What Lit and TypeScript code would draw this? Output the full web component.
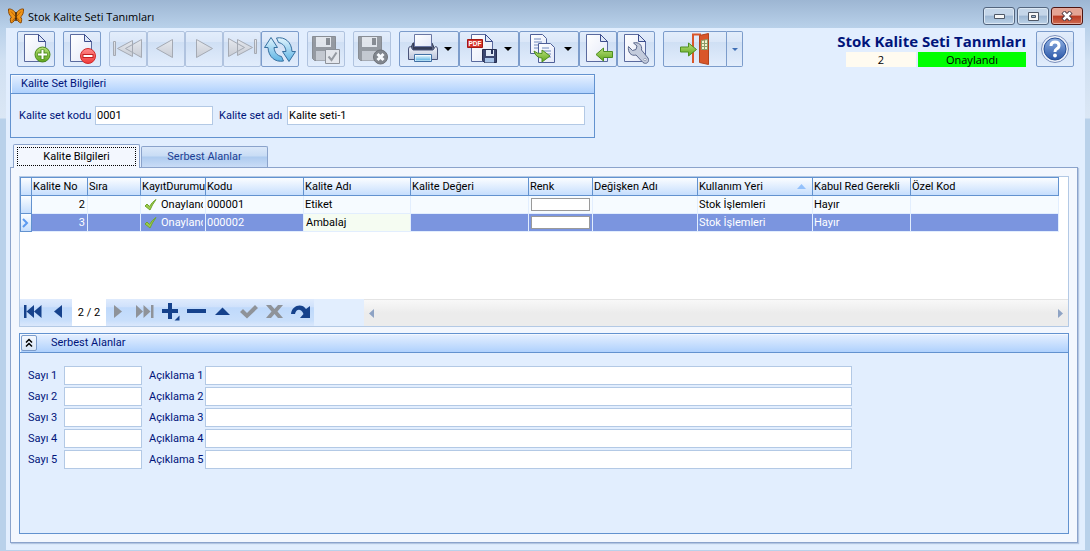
import { LitElement, html, svg, css } from "lit";
import { customElement } from "lit/decorators.js";

const page = svg`<path d="M4.500 1.500H18.500l7 7V28.500H4.500z" fill="url(#pg)" stroke="#5a6a9e"/><path d="M18.500 1.500v7h7z" fill="#dfe8f7" stroke="#3c4d8c"/>`;
const defs = svg`<defs>
  <linearGradient id="pg" x1="0" y1="0" x2="1" y2="1"><stop offset="0" stop-color="#fff"/><stop offset="1" stop-color="#e3e8f8"/></linearGradient>
  <linearGradient id="gn" x1="0" y1="0" x2="0" y2="1"><stop offset="0" stop-color="#b8e07a"/><stop offset="1" stop-color="#5ea51c"/></linearGradient>
  <linearGradient id="rd" x1="0" y1="0" x2="0" y2="1"><stop offset="0" stop-color="#ff8a8a"/><stop offset="1" stop-color="#f03a3a"/></linearGradient>
  <linearGradient id="gy" x1="0" y1="0" x2="0" y2="1"><stop offset="0" stop-color="#ececee"/><stop offset="1" stop-color="#c4c6cc"/></linearGradient>
  <linearGradient id="bl" x1="0" y1="0" x2="0" y2="1"><stop offset="0" stop-color="#e2f4fd"/><stop offset="1" stop-color="#5db4e4"/></linearGradient>
  <linearGradient id="hp" x1="0" y1="0" x2="0" y2="1"><stop offset="0" stop-color="#8fb0e2"/><stop offset="1" stop-color="#2a56a8"/></linearGradient>
  <linearGradient id="mt" x1="0" y1="0" x2="0" y2="1"><stop offset="0" stop-color="#f4f6fb"/><stop offset="1" stop-color="#b9c2d8"/></linearGradient>
</defs>`;
const floppy = svg`<path d="M2.500 3.500H25.500V27.500H4.500L2.500 25.500z" fill="#85888d" stroke="#74777c"/><path d="M6 4h15v10H6z" fill="#e4e6ea"/><path d="M16 5h4v7h-4z" fill="#74777c"/><path d="M6 18h15v9.500H6z" fill="#bfc2c8"/>`;

const glyphs: Record<string, unknown> = {
  add: svg`${page}<circle cx="22.500" cy="21.500" r="7.500" fill="url(#gn)" stroke="#4b8a1c"/><path d="M22.500 16.500v10M17.500 21.500h10" stroke="#4b8a1c" stroke-width="4"/><path d="M22.500 17v9M18 21.500h9" stroke="#fff" stroke-width="2"/>`,
  remove: svg`${page}<circle cx="22" cy="23" r="7.500" fill="url(#rd)" stroke="#d02a2a"/><path d="M16.500 23h11" stroke="#c22020" stroke-width="4"/><path d="M17.500 23h9" stroke="#fff" stroke-width="2"/>`,
  first: svg`<g fill="url(#gy)" stroke="#999ca3"><path d="M1.500 8.500h2v14h-2zM20.500 7.500v16L5.500 15.500zM29.500 6.500v18L13.500 15.500z"/></g>`,
  prev: svg`<path d="M22.500 6.500v18L6.500 15.500z" fill="url(#gy)" stroke="#999ca3"/>`,
  next: svg`<path d="M8.500 6.500v18l16-9z" fill="url(#gy)" stroke="#999ca3"/>`,
  last: svg`<g fill="url(#gy)" stroke="#999ca3"><path d="M28.500 6.500h2v14h-2zM11.500 6.500v16l15-8zM2.500 5.500v18l16-9z"/></g>`,
  refresh: svg`<g fill="url(#bl)" stroke="#376f9f" stroke-linejoin="round"><path d="M7 4.500L13.500 14.500H10C10.500 19.500 13 22.500 17.500 23.500L19.500 28C11 29.500 4.500 24 4 14.500H.500z"/><path d="M25 28.500L18.500 18.500H22C21.500 13.500 19 10.500 14.500 9.500L12.500 5C21 3.500 27.500 9 28 18.500H31.500z"/></g>`,
  save: svg`${floppy}<path d="M15.500 16.500h14v14h-14z" fill="#e6e7ea" stroke="#7a7d83"/><path d="M18.500 23.500l3 3.500 5-7.500" fill="none" stroke="#85888d" stroke-width="2"/>`,
  cancel: svg`${floppy}<circle cx="24.500" cy="24" r="7" fill="#6c6f74" stroke="#54565a"/><path d="M21.500 21l6 6M27.500 21l-6 6" stroke="#fff" stroke-width="3"/>`,
  print: svg`<path d="M6 10h19l4 9H2z" fill="#59637e" stroke="#323a54"/><path d="M6 10h19v7H6z" fill="#343c57"/><path d="M7.500 1.500h17v12h-17z" fill="url(#pg)" stroke="#6a77a3"/><path d="M1.500 16q0-2.500 2-2.500l2.500 3.500h20l2.500-3.500q2 0 2 2.500v10.500h-29z" fill="url(#mt)" stroke="#4b557a"/><path d="M7.500 21.500h17v7h-17z" fill="#fff" stroke="#4170a5"/><path d="M8.500 22.500h15v5h-15z" fill="url(#bl)"/>`,
  pdf: svg`${page}<path d="M.500 6.500h15v8h-15z" fill="#d4322c" stroke="#a31812"/><text x="1.500" y="13" font-size="6.500" font-weight="700" font-family="Liberation Sans, sans-serif" fill="#fff">PDF</text><path d="M15.500 16.500h14v13h-12l-2-2z" fill="#3b4770" stroke="#252e50"/><path d="M19 17h8v6h-8z" fill="#dfe9f7"/><path d="M24 17h2v4h-2z" fill="#27325a"/><path d="M18 25h9v4.500h-9z" fill="#a8c4e8"/>`,
  copy: svg`<path d="M3.500 1.500h12l4 4v15h-16z" fill="url(#pg)" stroke="#4f6098"/><path d="M7 6h7M7 9h8M7 12h8M7 15h8" stroke="#7189bd"/><path d="M11.500 10.500h12l4 4v15h-16z" fill="url(#pg)" stroke="#4f6098"/><path d="M15 15h7M15 18h9M15 21h9M15 24h9" stroke="#7189bd"/><path d="M7 18q3 3 8 2.500v-3.500l8 6-8 6v-4Q9 25 7 18z" fill="url(#gn)" stroke="#4e8f20"/>`,
  export: svg`${page}<path d="M14 21.500l7.500-6.500v3.500h9v6h-9v3.500z" fill="url(#gn)" stroke="#4e8f20"/>`,
  setup: svg`${page}<path d="M9.500 11.500l4 4 3.500-1 1-3.500-3.500-3c5-1.500 9 2 8 7l6.500 8c2 3.500-1.500 7-5 4.500L17 20c-5 1.500-8.500-3-7.500-8.500z" transform="translate(-1 2)" fill="#c3cbdc" stroke="#5b688c"/><circle cx="25" cy="26.500" r="1.200" fill="#fff" stroke="#5b688c" stroke-width=".5"/>`,
  exit: svg`<path d="M14 30V1.500h8" fill="none" stroke="#d9562a" stroke-width="2"/><path d="M20.500 2.500l9-2v31l-9-2z" fill="#d9562a" stroke="#b3431c"/><path d="M22.500 7.500l6-1v10h-6z" fill="#f3f2cf" stroke="#8a9a68"/><path d="M25.500 7v9.500M22.500 10.500h6M22.500 13.500h6" stroke="#8a9a68"/><path d="M1.500 14h8v-4l8 6.500-8 6.500v-4h-8z" fill="url(#gn)" stroke="#4e8f20"/>`,
  help: svg`<circle cx="16" cy="16" r="13.500" fill="#eef2fa" stroke="#7a8fbd"/><circle cx="16" cy="16" r="11" fill="url(#hp)" stroke="#274f96"/><path d="M12 13q0-4 4-4t4 3.500q0 2.500-2.500 3.500-1.500.800-1.500 3" fill="none" stroke="#fff" stroke-width="3"/><circle cx="16" cy="22.500" r="1.900" fill="#fff"/>`,
};

const icon = (name: string) => html`<svg class="icon" viewBox="0 0 32 32" aria-hidden="true">${defs}${glyphs[name]}</svg>`;

const navGlyphs: [string, string, boolean][] = [
  ["İlk", "M1 3h2.500v13H1zM11 3v13L3.500 9.500zM18.500 3v13L11 9.500z", true],
  ["Önceki", "M13 3v13L5 9.500z", true],
];
const navGlyphs2: [string, string, boolean][] = [
  ["Sonraki", "M5 3v13l8-6.500z", false],
  ["Son", "M1 3v13l7-6.500zM8.500 3v13l7-6.500zM16 3h2.500v13H16z", false],
  ["Ekle", "M7 1h4v6h6v4h-6v6H7v-6H1V7h6zM18.500 13.500v5h-5z", true],
  ["Sil", "M0 7h19v4H0z", true],
  ["Düzenle", "M2 13h15L9.500 5.500z", true],
  ["Kaydet", "M1 10l3-3 4 4 8-8 3 3L8 16.500z", false],
  ["İptal", "M1 3h5l3.500 4L13 3h5l-5.500 6.500L18 16h-5l-3.500-4L6 16H1l5.500-6.500z", false],
  ["Yenile", "M0 12C1 3 11 1 15 7l4-3v12H9l3.500-4C10 6 5 7 4 12z", true],
];

const columns: [string, string][] = [
  ["Kalite No", "c56"], ["Sıra", "c53"], ["KayıtDurumu", "c65"], ["Kodu", "c98"], ["Kalite Adı", "c107"],
  ["Kalite Değeri", "c118"], ["Renk", "c64"], ["Değişken Adı", "c105"], ["Kullanım Yeri", "c115"],
  ["Kabul Red Gerekli", "c98"], ["Özel Kod", ""],
];
const rows = [
  { no: 2, code: "000001", name: "Etiket", current: false },
  { no: 3, code: "000002", name: "Ambalaj", current: true },
];

@customElement("app-root")
export class AppRoot extends LitElement {
  static styles = css`
    :host { display: block; font: 11px/14px Roboto, "Liberation Sans", sans-serif; color: #000; }
    * { box-sizing: border-box; }
    button, input { font: inherit; color: inherit; margin: 0; padding: 0; }
    svg { display: block; flex: none; }
    .window { min-height: 100vh; display: flex; flex-direction: column; padding: 0 5px 1px 6px;
      background: linear-gradient(#9db6d3 0, #b9d1ea 28px, #d0e0f2 60px, #dbe7f5 118px, #b9d1ea 119px); }
    .titlebar { height: 28px; display: flex; align-items: flex-start; gap: 4px; padding: 7px 2px 0; }
    .caption { flex: 1; margin: 0; padding-top: 1px; line-height: 18px; }
    .caption, .status { font-family: "Open Sans", "Noto Sans", sans-serif; }
    .winbtns { display: flex; gap: 2px; }
    .winbtn { width: 32px; height: 18px; display: grid; place-items: center; border: 1px solid #53657e; border-radius: 3px;
      background: linear-gradient(#c5d6e9 45%, #9db7d3 50%, #bcd2e8); box-shadow: inset 0 0 0 1px #dce8f4; }
    .close { border-color: #4e1511; background: linear-gradient(#e4a494 45%, #b93a22 50%, #cf6a50); box-shadow: inset 0 0 0 1px #e5a99c; }
    .client { flex: 1; display: flex; flex-direction: column; background: #e2eefe; padding: 3px 7px 7px 4px; }
    .toolbar { display: flex; gap: 8px; padding: 0 4px 0 7px; height: 43px; align-items: flex-start; }
    .group { display: flex; }
    .tool { width: 38px; height: 36px; flex: none; display: flex; align-items: center; justify-content: center; gap: 5px;
      border: 1px solid #7c9ccb; border-radius: 2px; background: linear-gradient(#e3edfb 0, #dbe7f8 28%, #cfdff4 30%, #e2edfc 100%); }
    .tool:disabled { border-color: #b0c3df; }
    .tool:disabled .icon { opacity: .8; }
    .drop { width: 60px; }
    .exit { width: 64px; border-radius: 2px 0 0 2px; }
    .more { width: 16px; border-left: 0; border-radius: 0 2px 2px 0; }
    .icon { width: 32px; height: 32px; }
    .status { flex: 1; display: flex; flex-direction: column; align-items: flex-end; padding-right: 2px; }
    .status h1 { margin: 0; font-weight: 700; font-size: 15px; line-height: 21px; color: #00147a; white-space: nowrap; }
    .badges { display: flex; gap: 2px; text-align: center; line-height: 15px; }
    .count { width: 70px; background: #fffbf0; }
    .approved { width: 108px; background: #00ff00; }
    .box { border: 1px solid #6292cf; background: #e2eefe; color: #00147a; }
    .box-title { margin: 0; height: 19px; display: flex; align-items: center; gap: 14px; padding: 0 10px; font: inherit;
      border-bottom: 1px solid #6292cf; box-shadow: inset 1px 1px #f3f8ff; background: linear-gradient(#e6f0ff, #afd1fd); }
    .info { width: 585px; max-width: 100%; height: 64px; }
    .info-row { display: flex; align-items: center; padding: 12px 9px 0 8px; gap: 6px; white-space: nowrap; }
    .field { height: 19px; min-width: 0; border: 1px solid #b3c9e5; background: #fff; color: #000; padding: 0 1px; border-radius: 0; }
    .w118 { width: 118px; }
    .lk { width: 70px; }
    .la { width: 62px; }
    .fill { flex: 1; }
    .tabs { display: flex; align-items: flex-end; gap: 1px; margin-top: 6px; padding-left: 3px; height: 23px; }
    .tab { width: 127px; height: 21px; border: 1px solid #8ba3cb; border-bottom: 0; border-radius: 2px 2px 0 0; color: #1c3f94;
      background: linear-gradient(#dbe8f9 0, #c8dcf5 45%, #aecbef 50%, #c9dcf6 100%); }
    .tab.active { position: relative; height: 24px; margin-bottom: -1px; padding: 2px 3px; color: #000; background: #f3f7fe; }
    .tab.active span { display: block; height: 19px; line-height: 18px; border: 1px dotted #000; }
    .panel { flex: 1; display: flex; flex-direction: column; gap: 6px; padding: 8px; border: 1px solid #8ba3cb; background: #f3f7fe; box-shadow: 1px 1px 1px #b4c6e2; }
    .grid { height: 151px; display: flex; flex-direction: column; border: 1px solid #b3c9e5; background: #fff; }
    table { width: calc(100% - 9px); table-layout: fixed; border-collapse: separate; border-spacing: 0; }
    th, td { overflow: hidden; white-space: nowrap; text-align: left; font-weight: 400; padding: 0 0 0 1px; }
    th { height: 19px; border: solid #6292cf; border-width: 1px 1px 1px 0; background: linear-gradient(#fbfdff, #c6defd); }
    td { height: 18px; border: solid #e2eefe; border-width: 0 1px 1px 0; background: #f6fbff; }
    th:first-child, td:first-child { border-left: 1px solid #6292cf; }
    td:first-child { padding: 0; border-right-color: #6292cf; border-bottom-color: #6292cf; background: linear-gradient(#fbfdff, #c6defd); }
    .current td:not(:first-child) { background: #7b95df; color: #fff; }
    .current td.focused:nth-child(n) { background: #f5fcf2; color: #000; padding-left: 2px; }
    td.num { text-align: right; padding-right: 2px; }
    .cell { display: flex; align-items: center; height: 16px; }
    .ind { width: 12px; } .c56 { width: 56px; } .c53 { width: 53px; } .c65 { width: 65px; } .c98 { width: 98px; } .c107 { width: 107px; }
    .c118 { width: 118px; } .c64 { width: 64px; } .c105 { width: 105px; } .c115 { width: 115px; }
    .sorted { justify-content: space-between; padding-right: 6px; }
    .state { gap: 4px; padding-left: 2px; margin-right: 2px; overflow: hidden; }
    .state span { flex: 1; min-width: 0; overflow: hidden; }
    .color { width: 59px; height: 13px; display: block; margin-left: 1px; border: 1px solid #9a9a9a; background: #fff; }
    .footer { margin-top: auto; height: 27px; display: flex; background: #e2eefe; }
    .nav { display: flex; width: 344px; }
    .navbtns { display: flex; background: linear-gradient(#dfebfd 0, #cfe1fb 30%, #bfd9fb 32%, #c9dffb 80%, #dbe8fc); }
    .navbtn { width: 26px; border: 0; background: none; display: grid; place-items: center; color: #16428c; }
    .navbtn:disabled { color: #8f9399; }
    .pos { width: 34px; background: #fff; text-align: center; line-height: 27px; }
    .scroll { flex: 1; display: flex; align-items: center; justify-content: space-between; padding: 0 5px; border-top: 1px solid #e4e4e4; background: linear-gradient(#f8f8f8, #ececec 50%); }
    .free { flex: 1; min-height: 201px; }
    .free .box-title { padding: 0 1px; }
    .fold { width: 16px; height: 16px; display: grid; place-items: center; border: 1px solid #7c9ccb; border-radius: 2px; background: linear-gradient(#f4f8fe, #d8e6f8); color: #000; }
    .rows { display: flex; flex-direction: column; gap: 2px; padding: 13px 8px; }
    .row { display: flex; align-items: center; }
    .l1 { width: 36px; } .f1 { width: 78px; margin-right: 7px; } .l2 { width: 56px; } .f2 { width: 647px; }
  `;

  tool(name: string, label: string, disabled = false) {
    return html`<button class="tool" aria-label=${label} ?disabled=${disabled}>${icon(name)}</button>`;
  }
  dropTool(name: string, label: string) {
    return html`<button class="tool drop" aria-label=${label}>${icon(name)}<svg width="8" height="4"><path d="M0 0h8L4 4z"/></svg></button>`;
  }
  navButton([label, d, on]: [string, string, boolean]) {
    return html`<button class="navbtn" aria-label=${label} ?disabled=${!on}><svg width="21" height="21"><path d=${d} fill="currentColor"/></svg></button>`;
  }

  render() {
    return html`
      <div class="window">
        <header class="titlebar">
          <svg width="16" height="17" viewBox="0 0 16 17" aria-hidden="true"><path d="M8 7C6.500 3.500 3 1.500.500 2 .300 5 1 8.500 3.500 10c-1.500 1-1.500 3.500-.500 6C5.500 15.500 7 13 8 10.500 9 13 10.500 15.500 13 16c1-2.500 1-5-.500-6C15 8.500 15.700 5 15.500 2 13 1.500 9.500 3.500 8 7z" fill="#f09414" stroke="#8a4a0a"/><path d="M8 5v9" stroke="#3c2408" stroke-width="1.500"/><path d="M3 4.500L7 9M13 4.500L9 9M4.500 14L7 10.500M11.500 14L9 10.500" stroke="#b8620a" fill="none"/></svg>
          <p class="caption">Stok Kalite Seti Tanımları</p>
          <div class="winbtns">
            <button class="winbtn" aria-label="Simge durumuna küçült"><svg width="11" height="6"><path d="M.500 1.500h10v4H.500z" fill="#f7f7f7" stroke="#4e5766"/></svg></button>
            <button class="winbtn" aria-label="Ekranı kapla"><svg width="11" height="9"><path d="M.500.500h10v8H.500zM3.500 3.500v2h4v-2z" fill="#f7f7f7" fill-rule="evenodd" stroke="#4e5766"/></svg></button>
            <button class="winbtn close" aria-label="Kapat"><svg width="12" height="10"><path d="M2 1l8 8M10 1L2 9" stroke="#4e3a42" stroke-width="4.500"/><path d="M2.500 1.500l7 7M9.500 1.500l-7 7" stroke="#fff" stroke-width="2.500"/></svg></button>
          </div>
        </header>
        <main class="client">
          <div class="toolbar">
            ${this.tool("add", "Yeni")}${this.tool("remove", "Sil")}
            <div class="group">
              ${this.tool("first", "İlk kayıt", true)}${this.tool("prev", "Önceki kayıt", true)}${this.tool("next", "Sonraki kayıt", true)}${this.tool("last", "Son kayıt", true)}${this.tool("refresh", "Yenile")}
            </div>
            ${this.tool("save", "Kaydet", true)}${this.tool("cancel", "İptal", true)}
            <div class="group">
              ${this.dropTool("print", "Yazdır")}${this.dropTool("pdf", "PDF")}${this.dropTool("copy", "Kopyala")}${this.tool("export", "Aktar")}${this.tool("setup", "Ayarlar")}
            </div>
            <div class="group">
              <button class="tool exit" aria-label="Çıkış">${icon("exit")}</button>
              <button class="tool more" aria-label="Çıkış seçenekleri"><svg width="6" height="3"><path d="M0 0h6L3 3z" fill="#3f6fb5"/></svg></button>
            </div>
            <div class="status">
              <h1>Stok Kalite Seti Tanımları</h1>
              <div class="badges"><span class="count">2</span><span class="approved">Onaylandı</span></div>
            </div>
            ${this.tool("help", "Yardım")}
          </div>

          <section class="box info">
            <h2 class="box-title">Kalite Set Bilgileri</h2>
            <div class="info-row">
              <label class="lk" for="kod">Kalite set kodu</label><input class="field w118" id="kod" value="0001" />
              <label class="la" for="ad">Kalite set adı</label><input class="field fill" id="ad" value="Kalite seti-1" />
            </div>
          </section>

          <div class="tabs" role="tablist">
            <button class="tab active" role="tab" aria-selected="true"><span>Kalite Bilgileri</span></button>
            <button class="tab" role="tab" aria-selected="false">Serbest Alanlar</button>
          </div>
          <div class="panel">
            <div class="grid">
              <table>
                <thead><tr>
                  <th class="ind"></th>
                  ${columns.map(([name, width]) => html`<th class=${width}>${name === "Kullanım Yeri"
                    ? html`<div class="cell sorted">${name}<svg width="9" height="5"><path d="M0 5h9L4.500 0z" fill="#94c1fb"/></svg></div>`
                    : name}</th>`)}
                </tr></thead>
                <tbody>
                  ${rows.map((r) => html`<tr class=${r.current ? "current" : ""}>
                    <td>${r.current ? html`<svg width="9" height="10"><path d="M2 1l4 4-4 4" fill="none" stroke="#5c9af0" stroke-width="2"/></svg>` : ""}</td>
                    <td class="num">${r.no}</td><td></td>
                    <td><div class="cell state"><svg width="13" height="12"><path d="M1 7l2-2 2.500 2.500Q8 3 12 .500 8 6 6 11z" fill="#9ccb4c" stroke="#6fa52c"/></svg><span>Onaylandı</span></div></td>
                    <td>${r.code}</td><td class=${r.current ? "focused" : ""}>${r.name}</td><td></td>
                    <td><span class="color"></span></td><td></td><td>Stok İşlemleri</td><td>Hayır</td><td></td>
                  </tr>`)}
                </tbody>
              </table>
              <div class="footer">
                <div class="nav">
                  <div class="navbtns">${navGlyphs.map((g) => this.navButton(g))}</div>
                  <span class="pos">2 / 2</span>
                  <div class="navbtns">${navGlyphs2.map((g) => this.navButton(g))}</div>
                </div>
                <div class="scroll">
                  <svg width="5" height="9"><path d="M5 0v9L0 4.500z" fill="#8ea3c4"/></svg>
                  <svg width="5" height="9"><path d="M0 0v9l5-4.500z" fill="#8ea3c4"/></svg>
                </div>
              </div>
            </div>
            <section class="box free">
              <h2 class="box-title"><button class="fold" aria-label="Daralt"><svg width="8" height="10"><path d="M1 4.500L4 1.500l3 3M1 8.500l3-3 3 3" fill="none" stroke="#000" stroke-width="1.500"/></svg></button>Serbest Alanlar</h2>
              <div class="rows">
                ${[1, 2, 3, 4, 5].map((n) => html`<div class="row">
                  <label class="l1" for="s${n}">Sayı ${n}</label><input class="field f1" id="s${n}" />
                  <label class="l2" for="a${n}">Açıklama ${n}</label><input class="field f2" id="a${n}" />
                </div>`)}
              </div>
            </section>
          </div>
        </main>
      </div>`;
  }
}
